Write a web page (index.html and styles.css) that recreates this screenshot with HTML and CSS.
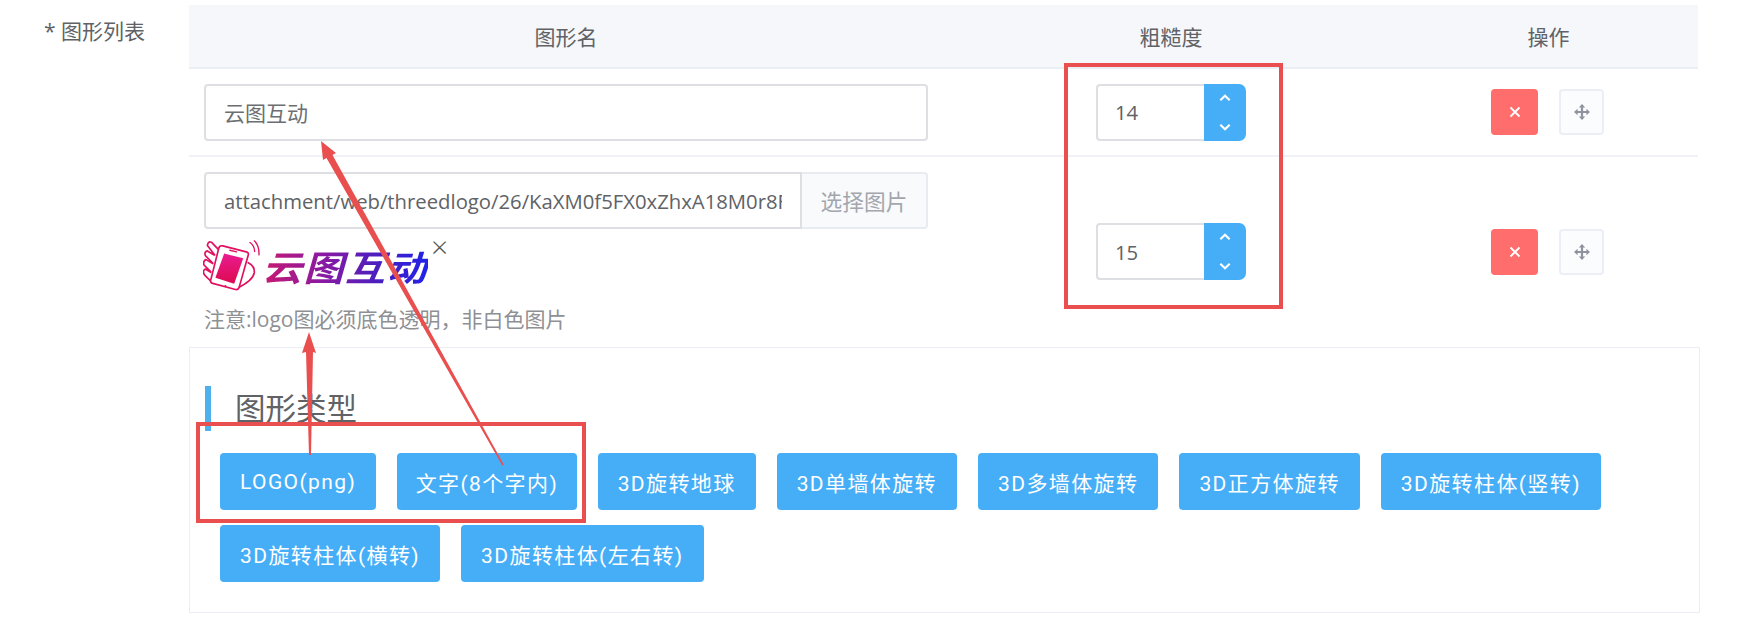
FILE: index.html
```html
<!DOCTYPE html>
<html lang="zh-CN">
<head>
<meta charset="utf-8">
<title>图形列表</title>
<link rel="stylesheet" href="styles.css">
</head>
<body>
<main class="form-row">
  <div class="form-label">* 图形列表</div>
  <div class="form-body">
    <div class="grid-row grid-head">
      <div class="cell-name">图形名</div>
      <div class="cell-rough">粗糙度</div>
      <div class="cell-ops">操作</div>
    </div>

    <div class="grid-row row-first">
      <div class="cell-name">
        <input class="text-input" type="text" value="云图互动">
      </div>
      <div class="cell-rough">
        <div class="num-input">
          <input class="num-value" type="text" value="14">
          <div class="spin">
            <svg viewBox="0 0 12 12" class="chev"><path d="M2 8 6 4l4 4"/></svg>
            <svg viewBox="0 0 12 12" class="chev"><path d="M2 4l4 4 4-4"/></svg>
          </div>
        </div>
      </div>
      <div class="cell-ops">
        <button class="btn-del"><svg viewBox="0 0 12 12"><path d="M1.500 1.500l9 9M10.500 1.500l-9 9"/></svg></button>
        <button class="btn-move"><svg viewBox="0 0 16 16"><path d="M8 0 4.800 3.600h2.100v3.300H3.600V4.800L0 8l3.600 3.200V9.100h3.300v3.300H4.800L8 16l3.200-3.600H9.100V9.100h3.300v2.100L16 8l-3.600-3.200v2.100H9.100V3.600h2.100z"/></svg></button>
      </div>
    </div>

    <div class="grid-row row-second">
      <div class="cell-name cell-stack">
        <div class="input-group">
          <input class="group-input" type="text" value="attachment/web/threedlogo/26/KaXM0f5FX0xZhxA18M0r8FHf5FX0.png">
          <span class="group-addon">选择图片</span>
        </div>
        <div class="logo-wrap">
          <svg class="logo-mark" viewBox="25 15 170 160">
            <defs>
              <linearGradient id="scr" x1="0" y1="0" x2="0" y2="1">
                <stop offset="0" stop-color="#ea1c92"/>
                <stop offset="1" stop-color="#dc0a50"/>
              </linearGradient>
            </defs>
            <g fill="none" stroke="#e0115f" stroke-width="5" stroke-linejoin="round" stroke-linecap="round">
              <path d="M75 50 50 24Q40 20 38 34L60 62M58 62 38 50Q28 52 32 64L54 86M54 88 34 76Q24 80 28 92L48 112M48 114 32 104Q22 110 30 122L50 142"/>
              <path d="M160 85Q180 95 178 115 174 140 125 162"/>
              <path d="M84 35 154 53Q162 55 160 62L133 158Q130 167 122 165L54 147Q46 145 48 137L72 42Q74 33 84 35z" fill="#fff"/>
              <path d="M88 58 145 72 118 148 62 130z" fill="url(#scr)" stroke="none"/>
              <path d="M105 48l20 5" stroke-width="4"/>
              <circle cx="92" cy="155" r="3" fill="#e0115f" stroke="none"/>
              <path d="M165 25q13 8 14 27M178 20q15 14 14 42" stroke-width="4"/>
            </g>
          </svg>
          <span class="logo-text">云图互动</span>
          <span class="logo-close">×</span>
        </div>
        <div class="note">注意:logo图必须底色透明，非白色图片</div>
      </div>
      <div class="cell-rough">
        <div class="num-input">
          <input class="num-value" type="text" value="15">
          <div class="spin">
            <svg viewBox="0 0 12 12" class="chev"><path d="M2 8 6 4l4 4"/></svg>
            <svg viewBox="0 0 12 12" class="chev"><path d="M2 4l4 4 4-4"/></svg>
          </div>
        </div>
      </div>
      <div class="cell-ops">
        <button class="btn-del"><svg viewBox="0 0 12 12"><path d="M1.500 1.500l9 9M10.500 1.500l-9 9"/></svg></button>
        <button class="btn-move"><svg viewBox="0 0 16 16"><path d="M8 0 4.800 3.600h2.100v3.300H3.600V4.800L0 8l3.600 3.200V9.100h3.300v3.300H4.800L8 16l3.200-3.600H9.100V9.100h3.300v2.100L16 8l-3.600-3.200v2.100H9.100V3.600h2.100z"/></svg></button>
      </div>
    </div>

    <section class="type-panel">
      <h2 class="type-title">图形类型</h2>
      <div class="type-buttons">
        <button class="type-btn">LOGO(png)</button>
        <button class="type-btn type-btn-tight">文字(8个字内)</button>
        <button class="type-btn">3D旋转地球</button>
        <button class="type-btn">3D单墙体旋转</button>
        <button class="type-btn">3D多墙体旋转</button>
        <button class="type-btn">3D正方体旋转</button>
        <button class="type-btn">3D旋转柱体(竖转)</button>
        <button class="type-btn">3D旋转柱体(横转)</button>
        <button class="type-btn">3D旋转柱体(左右转)</button>
      </div>
    </section>
  </div>
</main>

<svg class="marks" viewBox="0 0 1745 622">
  <rect class="mark-box" x="1066" y="65" width="215" height="242"/>
  <rect class="mark-box" x="198" y="424" width="386" height="97"/>
  <polygon class="mark-arrow" points="309,332 316,353 313,352 311,455 309,455 306,352 302,353"/>
  <polygon class="mark-arrow" points="321,141 336,153 332.500,155 503.700,464.600 502.300,465.400 326.500,158 323,160"/>
</svg>
</body>
</html>
```

FILE: styles.css
```css
* { box-sizing: border-box; }

html, body {
  margin: 0;
  height: 622px;
  overflow: hidden;
  background: #fff;
}

body {
  position: relative;
  font-family: "Open Sans", "Noto Sans CJK SC", sans-serif;
  font-size: 21px;
  color: #606266;
}

input, button {
  font: inherit;
  color: inherit;
}

.form-row {
  display: flex;
  padding-top: 5px;
}

.form-label {
  width: 189px;
  flex: none;
  padding: 10px 0 0 44px;
  line-height: 32px;
  white-space: nowrap;
}

.form-body {
  width: 1509px;
  flex: none;
}

.grid-row {
  display: grid;
  grid-template-columns: 754px 456px 299px;
}

.grid-head {
  height: 64px;
  background: #f5f7fa;
  border-bottom: 2px solid #ebeef5;
  align-items: center;
  text-align: center;
}

.row-first {
  height: 88px;
  border-bottom: 2px solid #f0f2f5;
  align-items: center;
}

.row-second {
  height: 189px;
  align-items: center;
}

.cell-name {
  padding: 0 15px;
}

.cell-stack {
  align-self: start;
  padding-top: 15px;
}

.cell-rough {
  display: flex;
  justify-content: center;
}

.cell-ops {
  display: flex;
  justify-content: flex-start;
  gap: 21px;
  padding-left: 92px;
}

.grid-head .cell-ops {
  display: block;
  padding-left: 0;
}

.text-input,
.group-input {
  display: block;
  width: 100%;
  height: 57px;
  padding: 0 18px;
  background: #fff;
  border: 2px solid #dddfe3;
  border-radius: 4px;
  outline: none;
}

.text-input {
  color: #6c6e72;
}

.input-group {
  display: flex;
  height: 57px;
}

.group-input {
  width: 598px;
  flex: none;
  border-radius: 4px 0 0 4px;
  font-size: 20.300px;
  text-overflow: clip;
}

.group-addon {
  flex: 1;
  display: flex;
  align-items: center;
  justify-content: center;
  background: #f8fafc;
  border: 2px solid #e8ebf0;
  border-left: 0;
  border-radius: 0 4px 4px 0;
  font-size: 21.700px;
  color: #a3a6ad;
}

.logo-wrap {
  position: relative;
  display: flex;
  align-items: center;
  height: 55px;
  margin-top: 9px;
  margin-left: -1px;
}

.logo-mark {
  width: 57px;
  height: 54px;
  flex: none;
}

.logo-text {
  margin-left: 2px;
  font-family: "Noto Sans CJK SC", sans-serif;
  font-size: 40px;
  font-weight: 700;
  font-style: italic;
  line-height: 44px;
  letter-spacing: 1.500px;
  background: linear-gradient(90deg, #c81a70 0%, #8c1aa0 35%, #4a1ec0 70%, #2222e8 100%);
  -webkit-background-clip: text;
  background-clip: text;
  color: transparent;
  transform: scaleY(.88);
}

.logo-close {
  position: absolute;
  left: 228px;
  top: -6px;
  font-size: 30px;
  line-height: 30px;
  font-weight: 300;
  color: #555;
}

.note {
  margin-top: 10px;
  line-height: 32px;
  color: #8e9094;
  white-space: nowrap;
}

.num-input {
  display: flex;
  width: 150px;
  height: 57px;
}

.num-value {
  width: 108px;
  height: 100%;
  padding: 0 0 0 17px;
  border: 2px solid #dddfe3;
  border-right: 0;
  border-radius: 4px 0 0 4px;
  font-size: 20.300px;
  outline: none;
}

.spin {
  flex: 1;
  display: flex;
  flex-direction: column;
  justify-content: space-between;
  align-items: center;
  padding: 7px 0;
  background: #46aef7;
  border-radius: 0 7px 7px 0;
}

.chev {
  width: 14px;
  height: 14px;
  fill: none;
  stroke: #fff;
  stroke-width: 1.800;
}

.btn-del,
.btn-move {
  display: flex;
  align-items: center;
  justify-content: center;
  width: 47px;
  height: 46px;
  padding: 0;
  border-radius: 4px;
}

.btn-del {
  background: #ff6d6d;
  border: 0;
}

.btn-del svg {
  width: 12px;
  height: 12px;
  fill: none;
  stroke: #fff;
  stroke-width: 1.800;
}

.btn-move {
  width: 45px;
  background: #fbfcfd;
  border: 2px solid #ebeef5;
}

.btn-move svg {
  width: 16px;
  height: 16px;
  fill: #8f939d;
}

.type-panel {
  width: 1511px;
  height: 266px;
  margin-top: 1px;
  padding: 38px 15px 0;
  border: 1px solid #ebeef5;
}

.type-title {
  margin: 0;
  height: 45px;
  padding-left: 24px;
  border-left: 6px solid #4fb0ee;
  font-size: 30.500px;
  font-weight: 400;
  line-height: 45px;
  color: #606266;
}

.type-buttons {
  display: flex;
  flex-wrap: wrap;
  gap: 15px 21px;
  margin-top: 22px;
  margin-left: 15px;
}

.type-btn {
  height: 57px;
  padding: 0 20px;
  border: 0;
  border-radius: 4px;
  background: #46aef7;
  color: #fff;
  font-family: Roboto, "Noto Sans CJK SC", sans-serif;
  font-size: 21px;
  letter-spacing: 1.400px;
  white-space: nowrap;
}

.type-btn-tight {
  padding: 0 18.500px;
}

.marks {
  position: absolute;
  left: 0;
  top: 0;
  width: 1745px;
  height: 622px;
  pointer-events: none;
}

.mark-box {
  fill: none;
  stroke: #e94f4f;
  stroke-width: 4;
}

.mark-arrow {
  fill: #e94f4f;
}
```
